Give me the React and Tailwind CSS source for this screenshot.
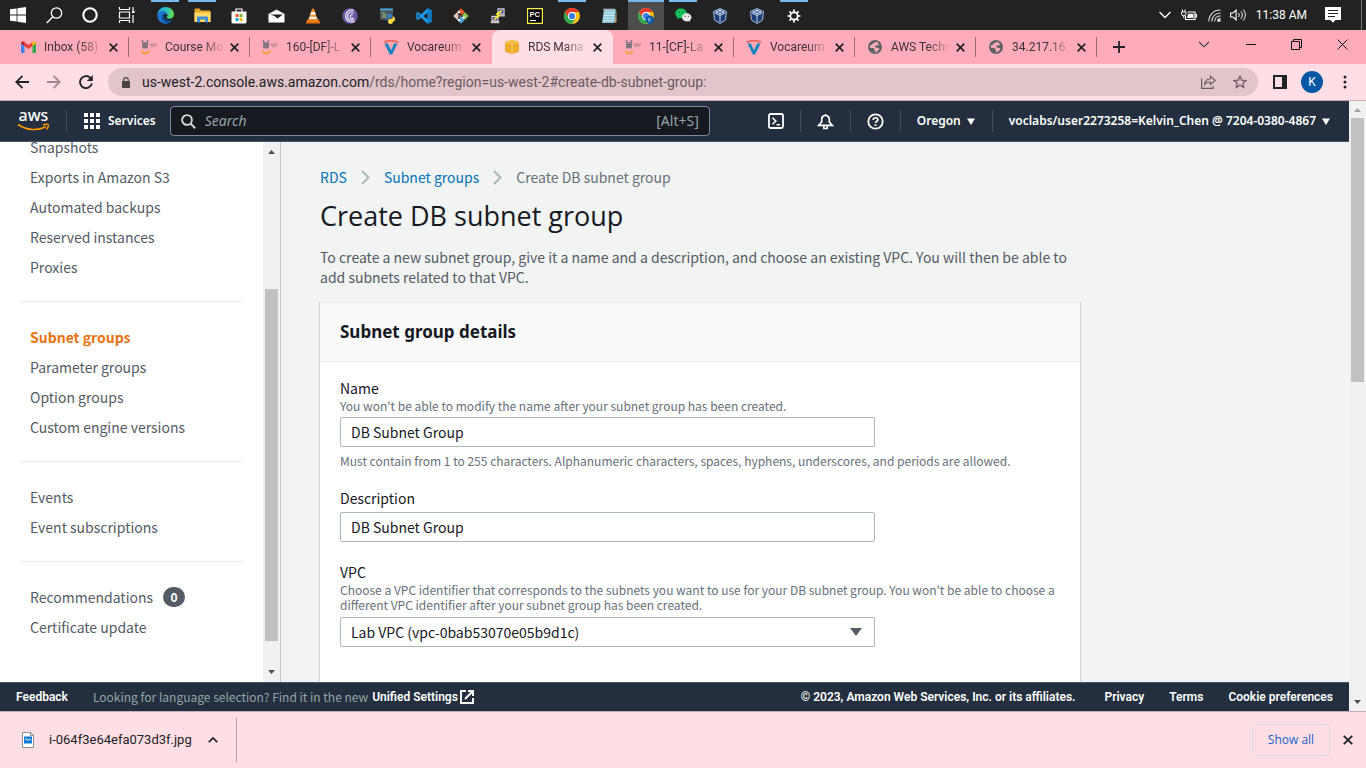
import React from "react";

/* ---------- taskbar icons ---------- */

const S = ({ children, w = 16, h = 16, vb = "0 0 16 16", className = "" }) => (
  <svg width={w} height={h} viewBox={vb} fill="none" className={`shrink-0 ${className}`} aria-hidden="true">
    {children}
  </svg>
);

const Windows = () => (
  <S>
    <path d="M0 2.3 6.6 1.4V7.6H0zM7.4 1.2 16 0V7.6H7.4zM0 8.4H6.6V14.6L0 13.7zM7.4 8.4H16V16L7.4 14.8z" fill="#fff" />
  </S>
);
const SearchThin = () => (
  <S w={17} h={17} vb="0 0 17 17">
    <circle cx="10.5" cy="6" r="5.2" stroke="#fff" strokeWidth="1.3" />
    <path d="M6.8 9.8 0.8 16" stroke="#fff" strokeWidth="1.3" />
  </S>
);
const Cortana = () => (
  <S>
    <circle cx="8" cy="8" r="6.7" stroke="#fff" strokeWidth="2.1" />
  </S>
);
const TaskView = () => (
  <S w={17} vb="0 0 17 16">
    <path d="M1.5 0v2.5h10V0M1.5 16v-2.500h10V16M1.500 5h10v6H1.500zM15 0v3M15 8v8" stroke="#fff" strokeWidth="1.2" />
    <path d="M14 3.500h2.500v2.500H14z" fill="#fff" />
  </S>
);
const Edge = () => (
  <S w={17} h={17} vb="0 0 24 24">
    <defs>
      <linearGradient id="edgeA" x1="2" y1="6" x2="23" y2="9" gradientUnits="userSpaceOnUse">
        <stop stopColor="#28a9e5" />
        <stop offset=".55" stopColor="#2fc4c0" />
        <stop offset="1" stopColor="#5fe04c" />
      </linearGradient>
    </defs>
    <path d="M0.500 10.500C1.200 4.500 6 0 12 0c6.800 0 12 4.600 12 10.200 0 4-3 6.300-6.400 6.300-2.600 0-4-1-4-1.800 0-.6 1.200-1 1.200-3 0-2.600-2.600-5.200-6.400-5.200-4 0-6.600 2-7.900 4z" fill="url(#edgeA)" />
    <path d="M0.400 11C1.600 8 4.600 6.500 8.200 6.500c3.400 0 6 2 6.500 4.300-1-.8-2-1-3-1-2.600 0-4.200 2.200-4.200 5 0 4.200 3.600 8 9 8.200A12 12 0 0 1 .4 11z" fill="#1a76d2" />
    <path d="M7.500 14.800c0-2.600 1.500-4.500 3.300-5-1.200 1-1.600 2.400-1.200 4 .8 3.200 4 5.200 7.600 5.200 2.100 0 3.900-.7 5.100-1.500-1.300 2.600-3.600 4.700-6.500 5.500-4.700-.2-8.300-4-8.300-8.200z" fill="#0e4f9e" />
  </S>
);
const Folder = () => (
  <S w={17} h={15} vb="0 0 17 15">
    <path d="M.5 1.500A1 1 0 0 1 1.500.5h4l1.500 2h8.500a1 1 0 0 1 1 1V14H.5z" fill="#e9a923" />
    <path d="M.5 4.500h16V14H.5z" fill="#fed867" />
    <path d="M3 14.500V9.500a1 1 0 0 1 1-1h9a1 1 0 0 1 1 1v5h-3v-3H6v3z" fill="#3f8fd8" />
  </S>
);
const Store = () => (
  <S>
    <path d="M5 4V1h6v3" stroke="#fff" strokeWidth="1.2" />
    <path d="M.5 3.500h15V14a1.500 1.500 0 0 1-1.500 1.500H2A1.500 1.500 0 0 1 .5 14z" fill="#fff" />
    <path d="M4.500 6h3v3h-3z" fill="#f0502a" />
    <path d="M8.500 6h3v3h-3z" fill="#7db928" />
    <path d="M4.500 10h3v3h-3z" fill="#1ba1e2" />
    <path d="M8.500 10h3v3h-3z" fill="#fbb900" />
  </S>
);
const Mail = () => (
  <S w={17} h={14} vb="0 0 17 14">
    <path d="M.5 5 8.500.5l8 4.500v8.500H.5z" fill="#fff" />
    <path d="M2 5.500h13L9.500 9.500 6.500 7z" fill="#222" />
  </S>
);
const Vlc = () => (
  <S>
    <path d="M2.500 11h11l1.800 4.500H.7z" fill="#e8720c" />
    <path d="M7 .8h2l3.600 11.400c-1.600 1.400-7.600 1.400-9.200 0z" fill="#f58a1f" />
    <path d="M6 4h4l.9 2.800H5.100zM4.500 8.700h7l.8 2.400H3.700z" fill="#f1f1f1" />
  </S>
);
const BitTorrent = () => (
  <S>
    <circle cx="8" cy="8" r="7.700" fill="#6a58a5" />
    <path d="M12 2.500A6 6 0 1 0 13 13M11.500 5A3.800 3.800 0 1 0 12 11M11 7a1.800 1.800 0 1 0 .5 2.500" stroke="#e9e5f5" strokeWidth="1.200" />
  </S>
);
const PyTerminal = () => (
  <S>
    <path d="M1 .5h13V12H1z" fill="#4a5258" />
    <path d="M1 .5h13v2H1z" fill="#4aa0d8" />
    <path d="M2.500 5h4M3.500 7h4M2.500 9h5" stroke="#9fc77a" strokeWidth="1" />
    <path d="M8 7.500c0-1.500 1-2 2.500-2S13 6 13 7.500V10H9.500C8 10 7.500 11 7.500 12.500 6 12 6 9 8 9z" fill="#3d7ab5" />
    <path d="M13.500 8.500c2 0 2.500 1 2.500 2.500s-.5 2.500-2 2.500c0 1.500-.8 2.500-2.500 2.500S9 15 9 13.500 9.500 11 11 11h2.500z" fill="#ffd94a" />
  </S>
);
const VsCode = () => (
  <S>
    <path d="M11.500.3 5 6.400 2 4 .5 4.800v6.400L2 12l3-2.400 6.500 6.100 4-1.700V2zM11.500 4.500v7L7.200 8zM2 6.200 3.700 8 2 9.800z" fill="#1f9cf0" fillRule="evenodd" />
    <path d="m11.500.3 4 1.700v12l-4 1.700z" fill="#0b78c4" />
  </S>
);
const Git = () => (
  <S>
    <path d="M8 .3 11.800 4 8 8 4.200 4z" fill="#e8562c" />
    <path d="M4 4.300 7.800 8 4 11.800.3 8z" fill="#e8c9b5" />
    <path d="M12 4.300 15.700 8 12 11.800 8.200 8z" fill="#8cc84b" />
    <path d="M8 8.200l3.800 3.800L8 15.700 4.200 12z" fill="#4f9fd8" />
    <path d="M6 3.500v9M6 5l4.500 4.500" stroke="#2b2b2b" strokeWidth="1.400" />
    <circle cx="6" cy="4" r="1.300" fill="#fff" />
    <circle cx="10.500" cy="9.500" r="1.300" fill="#fff" />
    <circle cx="6" cy="12" r="1.300" fill="#fff" />
  </S>
);
const Putty = () => (
  <S>
    <path d="M8 .8h6v5H8zM2 8.300h6v4.500H2z" fill="#3333a8" stroke="#d3d3d3" strokeWidth="1.200" />
    <path d="M7 6.500h8v2H7zM.8 13h8.500v2.200H.8z" fill="#c3c3c3" />
    <path d="M12 2.500 7 6l2 1.500-5 4" stroke="#ffee2b" strokeWidth="1.800" />
  </S>
);
const PyCharm = () => (
  <S>
    <path d="M.6.6h14.800v14.800H.6z" fill="#000" stroke="#f5f34a" strokeWidth="1.200" />
    <path d="M3 12.500h6" stroke="#fff" strokeWidth="1.200" />
    <text x="2.600" y="9" fontSize="7.500" fontWeight="700" fill="#fff" fontFamily="Liberation Sans, sans-serif">PC</text>
  </S>
);
const Chrome = ({ badge }) => (
  <S>
    <circle cx="8" cy="8" r="8" fill="#fbc116" />
    <path d="M8 8V4h6.930A8 8 0 0 0 1.070 4L4.540 10z" fill="#e33b2e" />
    <path d="M1.070 4A8 8 0 0 0 8 16l3.460-6L8 8 4.540 10z" fill="#2da94f" />
    <circle cx="8" cy="8" r="4" fill="#fff" />
    <circle cx="8" cy="8" r="3.100" fill="#3b7ded" />
    {badge && (
      <>
        <circle cx="11.800" cy="11.800" r="4.200" fill="#0b57a4" />
        <path d="M10.800 10v3.600M13 10l-2 1.800 2 1.800" stroke="#cfe3f7" strokeWidth=".7" />
      </>
    )}
  </S>
);
const Notepad = () => (
  <S>
    <path d="M3 1.500h12L13.500 15H1z" fill="#8fc9dc" />
    <path d="M13.500 15 15.500 1.500V14z" fill="#caa56a" />
    <path d="M3 .5v2M5 .5v2M7 .5v2M9 .5v2M11 .5v2M13 .5v2" stroke="#e5e5e5" strokeWidth="1" />
    <path d="M3 5h10.500M2.800 7.500h10.500M2.500 10H13M2.200 12.500h10.500" stroke="#cdeaf3" strokeWidth="1" />
  </S>
);
const WeChat = () => (
  <S w={17} h={15} vb="0 0 17 15">
    <path d="M6 .5C2.800.5.3 2.600.3 5.300c0 1.500.8 2.800 2 3.700L1.800 11l2.200-1.100c.7.2 1.300.3 2 .3 3.200 0 5.700-2.200 5.700-4.900S9.200.5 6 .5z" fill="#12c65b" />
    <circle cx="4.200" cy="4" r=".8" fill="#1b5a33" />
    <circle cx="8" cy="4" r=".8" fill="#1b5a33" />
    <path d="M11.800 5.300c-2.700 0-4.800 1.800-4.800 4s2.100 4.100 4.800 4.100c.5 0 1.100-.1 1.600-.3l1.800.9-.4-1.700c1-.7 1.700-1.800 1.700-3 0-2.200-2.100-4-4.700-4z" fill="#ececec" />
    <circle cx="10.200" cy="8.300" r=".7" fill="#666" />
    <circle cx="13.400" cy="8.300" r=".7" fill="#666" />
  </S>
);
const VirtualBox = () => (
  <S>
    <path d="M8 .5 14.500 3.500 13.500 12 8 15.500 2.500 12 1.500 3.500z" fill="#1d3e78" stroke="#a9bfdc" strokeWidth="1" />
    <path d="M8 1.500 13 4 8 6.500 3 4z" fill="#dfe9f6" />
    <path d="M8 7v7.500M3 5l5 2.500L13 5" stroke="#c5d6ec" strokeWidth="1" />
    <path d="m5.500 3.200 5 2.200M10.500 3.200l-5 2.200" stroke="#2d5ca6" strokeWidth="1" />
  </S>
);
const Gear = () => (
  <S w={14} h={14} vb="0 0 14 14">
    <circle cx="7" cy="7" r="3.700" stroke="#fff" strokeWidth="1.800" />
    <path d="M7 .5v2.500M7 11v2.500M.5 7H3M11 7h2.500M2.400 2.400l1.800 1.800M9.800 9.800l1.800 1.800M2.400 11.600l1.800-1.800M9.800 4.200l1.800-1.800" stroke="#fff" strokeWidth="1.700" />
  </S>
);

const systemButtons = [
  { label: "Start", Icon: Windows },
  { label: "Search Windows", Icon: SearchThin },
  { label: "Cortana", Icon: Cortana },
  { label: "Task View", Icon: TaskView },
];
const apps = [
  { label: "Edge", Icon: Edge, open: true },
  { label: "File Explorer", Icon: Folder, open: true },
  { label: "Store", Icon: Store },
  { label: "Mail", Icon: Mail },
  { label: "VLC", Icon: Vlc },
  { label: "BitTorrent", Icon: BitTorrent },
  { label: "Python terminal", Icon: PyTerminal },
  { label: "VS Code", Icon: VsCode },
  { label: "Git", Icon: Git },
  { label: "PuTTY", Icon: Putty },
  { label: "PyCharm", Icon: PyCharm },
  { label: "Chrome", Icon: Chrome, open: true },
  { label: "Notepad", Icon: Notepad },
  { label: "Chrome profile", Icon: () => <Chrome badge />, open: true, active: true },
  { label: "WeChat", Icon: WeChat, open: true },
  { label: "VirtualBox", Icon: VirtualBox },
  { label: "VirtualBox VM", Icon: VirtualBox },
  { label: "Settings", Icon: Gear, open: true },
];

function Taskbar() {
  return (
    <div className="flex h-[30px] shrink-0 items-stretch bg-[#222222] text-white">
      {systemButtons.map(({ label, Icon }) => (
        <button key={label} aria-label={label} className="flex w-9 items-center justify-center">
          <Icon />
        </button>
      ))}
      <div className="ml-[3px] flex gap-px">
        {apps.map(({ label, Icon, open, active }) => (
          <button
            key={label}
            aria-label={label}
            className={`flex w-9 flex-col items-center ${active ? "bg-[#4d4d4d]" : ""}`}
          >
            <span className={`h-[2px] ${active ? "w-full" : "w-7"} ${open ? "bg-[#76b9ed]" : ""}`} />
            <span className="flex flex-1 items-center justify-center pb-px">
              <Icon />
            </span>
          </button>
        ))}
      </div>
      <div className="ml-auto flex items-center">
        <S w={12} h={8} vb="0 0 12 8" className="mr-[10px]">
          <path d="m.5 1 5.500 5.500L11.500 1" stroke="#fff" strokeWidth="1.300" />
        </S>
        <S w={16} h={12} vb="0 0 16 12" className="mr-[11px]">
          <path d="M6.500 3h7.500v7.500H4.500V7" stroke="#fff" strokeWidth="1.200" />
          <path d="M7 4.700h5.500v4.200H6zM14.500 5H16v3.500h-1.500z" fill="#fff" />
          <path d="M.5 3h4.500v1.500a2.200 2.200 0 0 1-4.500 0zM1.500.5V3M4 .5V3M2.700 6.500V9" stroke="#fff" strokeWidth="1" />
        </S>
        <S w={13} h={13} vb="0 0 13 13" className="mr-[9px]">
          <path d="M.8 12.500C.8 6 5.500 1 12.500 1M3.800 12.500c0-5 3.700-8.500 8.700-8.500M6.700 12.500c0-3.200 2.400-5.600 5.800-5.600M9.500 12.500c0-1.700 1.200-3 3-3" stroke="#ddd" strokeWidth="1.100" />
          <circle cx="11.300" cy="11.500" r="1.300" fill="#fff" />
        </S>
        <S w={17} h={14} vb="0 0 17 14" className="mr-[9px]">
          <path d="M.6 5v4h2.500l3 3V2L3.100 5z" stroke="#fff" strokeWidth="1.100" />
          <path d="M8.500 5a3 3 0 0 1 0 4M10.800 3.200a5.500 5.500 0 0 1 0 7.600M13.200 1.500a8 8 0 0 1 0 11" stroke="#eee" strokeWidth="1" />
        </S>
        <span className="font-['Roboto',sans-serif] text-xs">11:38 AM</span>
        <S w={16} h={16} vb="0 0 16 16" className="ml-[18px]">
          <path d="M0 0h16v13h-5.500L8 15.800 5.500 13H0z" fill="#fff" />
          <path d="M3 3.500h10M3 6.500h10M3 9.500h7" stroke="#222" strokeWidth="1" />
        </S>
        <span className="ml-[20px] mr-1 h-[30px] w-px bg-[#777]" />
      </div>
    </div>
  );
}

/* ---------- browser chrome ---------- */

const Gmail = () => (
  <S w={15} h={12} vb="0 0 15 12">
    <path d="M0 1.500V11a1 1 0 0 0 1 1h2.500V4z" fill="#4285f4" />
    <path d="M15 1.500V11a1 1 0 0 1-1 1h-2.500V4z" fill="#34a853" />
    <path d="m3.500 1 4 3 4-3v4l-4 3-4-3z" fill="#ea4335" />
    <path d="M0 2.300C0 .6 2 0 3.500 1v4L0 2.500z" fill="#c5221f" />
    <path d="M15 2.300C15 .6 13 0 11.500 1v4L15 2.500z" fill="#fbbc04" />
  </S>
);
const Llama = () => (
  <S w={16} h={15} vb="0 0 16 15">
    <path d="M1.500 0v2.500M6.500 0v2.500" stroke="#8a7682" strokeWidth="1.600" />
    <path d="M1 2h6V8.500H1z" fill="#93808c" />
    <path d="M1.500 4.500h5M1.500 6.800h5" stroke="#6f616c" strokeWidth="1" />
    <path d="M8.500 5.500c1-2.500 1.500-2.500 2 0s1.300 1 1.500-1 1.300-1 1.500 1 1.500.5 2-2.500" stroke="#cd8f9b" strokeWidth="1.500" />
    <path d="M1 10.500c0 4 6.500 4 6.500 0" stroke="#f6a13f" strokeWidth="1.800" />
  </S>
);
const Voc = () => (
  <S w={16} h={15} vb="0 0 16 15">
    <path d="M.8 2.300C5 .4 11 .4 15.200 2.300" stroke="#f0645a" strokeWidth="1.600" />
    <path d="M1.500 3.500h3.300L8 10.200l3.200-6.700h3.300L9.200 14.500H6.800z" fill="#1585c0" />
  </S>
);
const Cube = () => (
  <S w={16} h={16} vb="0 0 16 16">
    <path d="M8 .8 15 3v9.500L8 15.300 1 12.500V3z" fill="#efac28" />
    <path d="M1 3.300 8 5.200l7-1.900M8 5.200v10" stroke="#f9d07c" strokeWidth=".9" />
    <path d="M8 .8 15 3 8 5 1 3z" fill="#f5be46" />
  </S>
);
const Globe = () => (
  <S w={14} h={14} vb="0 0 14 14">
    <circle cx="7" cy="7" r="7" fill="#5f6368" />
    <path d="M8 1.500c-.3 1.200-1 1.300-2.200 1.500C4.500 3.200 5 4.500 3.800 4.800c-1 .2-2 .8-2.200 1.700C1.500 7.700 3 8 4.500 8s2 .6 2 1.700c0 .8.800.9.900 2.300.1 1 .8.600 1.200 0 .7-1 2.400-1.500 2.600-2.900.1-1.100-1.200-1.300-2.200-1.300-1.200 0-1.800-.8-1.800-1.600 0-.9 1.300-1 2.300-.8 1.200.2 1.500-.7 1-1.600C10 3 9.200 2 8 1.500z" fill="#ffabb9" />
  </S>
);
const Cross = ({ size = 9, sw = 1.7 }) => (
  <S w={size} h={size} vb="0 0 9 9">
    <path d="m.7.7 7.600 7.600M8.300.7.7 8.300" stroke="#202124" strokeWidth={sw} />
  </S>
);

const tabs = [
  { title: "Inbox (58)", Icon: Gmail },
  { title: "Course Mo", Icon: Llama },
  { title: "160-[DF]-L", Icon: Llama },
  { title: "Vocareum", Icon: Voc },
  { title: "RDS Mana", Icon: Cube, active: true },
  { title: "11-[CF]-La", Icon: Llama },
  { title: "Vocareum", Icon: Voc },
  { title: "AWS Techn", Icon: Globe },
  { title: "34.217.16.", Icon: Globe },
];

function TabStrip() {
  return (
    <div className="flex h-[34px] shrink-0 items-stretch bg-[#ffabb9] pl-2 font-['Roboto',sans-serif] text-xs text-[#3c3034]">
      {tabs.map(({ title, Icon, active }, i) => (
        <div
          key={i}
          className={`flex w-[121px] shrink-0 items-center pl-3 ${active ? "rounded-t-lg bg-[#ffdfe5]" : ""}`}
        >
          <span className="flex w-4 justify-center">
            <Icon />
          </span>
          <span className="ml-2 w-[61px] whitespace-nowrap [mask-image:linear-gradient(to_right,black_36px,transparent_60px)]">
            {title}
          </span>
          <button aria-label={`Close ${title}`} className="ml-1 flex">
            <Cross />
          </button>
          <span
            className={`ml-auto h-5 w-px ${active || tabs[i + 1]?.active ? "" : "bg-[#9b6a74]"}`}
          />
        </div>
      ))}
      <button aria-label="New tab" className="ml-4 flex items-center">
        <S w={12} h={12} vb="0 0 12 12">
          <path d="M6 0v12M0 6h12" stroke="#202124" strokeWidth="1.800" />
        </S>
      </button>
      <div className="ml-auto flex items-start pt-2 pr-[18px]">
        <button aria-label="Search tabs" className="flex h-3 w-[46px] items-center justify-end">
          <S w={12} h={7} vb="0 0 12 7"><path d="m1 .8 5 5 5-5" stroke="#333" strokeWidth="1.100" /></S>
        </button>
        <button aria-label="Minimize" className="flex h-3 w-[46px] items-center justify-end">
          <S w={10} h={1} vb="0 0 10 1"><path d="M0 .5h10" stroke="#111" strokeWidth="1" /></S>
        </button>
        <button aria-label="Restore" className="flex h-3 w-[46px] items-center justify-end">
          <S w={11} h={11} vb="0 0 11 11"><path d="M.5 2.500h8v8h-8zM2.500 2.500v-2h8v8h-2" stroke="#111" strokeWidth="1" /></S>
        </button>
        <button aria-label="Close window" className="flex h-3 w-[46px] items-center justify-end">
          <S w={11} h={11} vb="0 0 11 11"><path d="m.5.5 10 10M10.500.5l-10 10" stroke="#111" strokeWidth="1" /></S>
        </button>
      </div>
    </div>
  );
}

function Toolbar() {
  return (
    <div className="flex h-[37px] shrink-0 items-center border-b border-[#c5adb2] bg-[#ffdfe5] pr-[19px] pl-[15px]">
      <button aria-label="Back" className="flex">
        <S w={14} h={14} vb="0 0 14 14"><path d="M14 7H1.500M7.500.8 1.300 7l6.200 6.200" stroke="#202124" strokeWidth="1.800" /></S>
      </button>
      <button aria-label="Forward" className="ml-[18px] flex">
        <S w={14} h={14} vb="0 0 14 14"><path d="M0 7h12.500M6.500.8 12.700 7l-6.200 6.200" stroke="#9f8a8f" strokeWidth="1.800" /></S>
      </button>
      <button aria-label="Reload" className="ml-[18px] flex">
        <S w={14} h={14} vb="0 0 14 14">
          <path d="M12.900 8.500A6 6 0 1 1 11.300 2.800L12.500 4" stroke="#202124" strokeWidth="1.900" />
          <path d="M13.800 0v6H7.800z" fill="#202124" />
        </S>
      </button>
      <div className="ml-[15px] flex h-7 flex-1 items-center rounded-full bg-[#e1c5ca] pr-[11px] pl-[14px]">
        <S w={8} h={11} vb="0 0 8 11">
          <path d="M0 4h8v7H0z" fill="#4b4447" />
          <path d="M1.800 4.500V2.800a2.200 2.200 0 0 1 4.400 0v1.700" stroke="#4b4447" strokeWidth="1.200" />
        </S>
        <span className="ml-3 flex-1 font-['Roboto',sans-serif] text-sm whitespace-nowrap text-[#6b5b5f]">
          <span className="text-[#202124]">us-west-2.console.aws.amazon.com</span>/rds/home?region=us-west-2#create-db-subnet-group:
        </span>
        <button aria-label="Share" className="flex">
          <S w={15} h={14} vb="0 0 15 14">
            <path d="M.6 3.500v9.900h11.500v-2.500" stroke="#6b5b5f" strokeWidth="1.200" />
            <path d="M3.500 9.500C4 5.800 6.300 4 9.500 4V1.200L14.200 5.500 9.500 9.500V7C7 7 5 7.500 3.500 9.500z" stroke="#6b5b5f" strokeWidth="1.100" />
          </S>
        </button>
        <button aria-label="Bookmark" className="ml-[17px] flex">
          <S w={14} h={14} vb="0 0 14 14">
            <path d="m7 1.200 1.700 3.900 4.300.4-3.200 2.800.9 4.200L7 10.300l-3.700 2.200.9-4.200L1 5.500l4.300-.4z" stroke="#6b5b5f" strokeWidth="1.300" />
          </S>
        </button>
      </div>
      <button aria-label="Side panel" className="ml-[15px] flex">
        <S w={14} h={14} vb="0 0 14 14">
          <path d="M1 1h12v12H1z" stroke="#202124" strokeWidth="2" />
          <path d="M9 0h5v14H9z" fill="#202124" />
        </S>
      </button>
      <button aria-label="Profile" className="ml-[14px] flex h-[22px] w-[22px] items-center justify-center rounded-full bg-[#0157a5] font-['Roboto',sans-serif] text-xs text-white">
        K
      </button>
      <button aria-label="Menu" className="ml-5 flex">
        <S w={4} h={14} vb="0 0 4 14">
          <circle cx="2" cy="2" r="1.500" fill="#202124" />
          <circle cx="2" cy="7" r="1.500" fill="#202124" />
          <circle cx="2" cy="12" r="1.500" fill="#202124" />
        </S>
      </button>
    </div>
  );
}

/* ---------- AWS console ---------- */

const Caret = () => (
  <S w={8} h={7} vb="0 0 8 7"><path d="M0 .5h8L4 7z" fill="currentColor" /></S>
);
const Divider = () => <span className="h-[22px] w-px shrink-0 bg-[#414d5c]" />;

function ConsoleHeader() {
  return (
    <header className="flex h-[41px] shrink-0 items-center border-b border-[#4a5361] bg-[#232f3e] font-['Noto_Sans',sans-serif] text-xs font-semibold text-white">
      <a href="#home" aria-label="AWS home" className="ml-[17px] flex">
        <S w={33} h={24} vb="0 0 33 24">
          <text x="1.500" y="12" fontSize="16" fontWeight="500" fill="#fff" fontFamily="Noto Sans, sans-serif">aws</text>
          <path d="M1 15.500c9 6.300 20 6.200 28 2.300" stroke="#ff9900" strokeWidth="1.700" />
          <path d="M26 16c2-.9 4.700-.9 5.200-.3s-.2 3.200-1.700 4.800" stroke="#ff9900" strokeWidth="1.400" />
        </S>
      </a>
      <span className="ml-4 flex"><Divider /></span>
      <button className="ml-[17px] flex items-center gap-2">
        <S w={16} h={16} vb="0 0 16 16">
          <path d="M0 0h4v4H0zM6 0h4v4H6zM12 0h4v4h-4zM0 6h4v4H0zM6 6h4v4H6zM12 6h4v4h-4zM0 12h4v4H0zM6 12h4v4H6zM12 12h4v4h-4z" fill="#fff" />
        </S>
        Services
      </button>
      <label className="ml-[14px] flex h-[30px] w-[540px] items-center rounded-sm border border-[#7d8998] bg-[#161a20] px-[10px]">
        <S w={15} h={15} vb="0 0 15 15">
          <circle cx="6" cy="6" r="4.900" stroke="#d5dbdb" strokeWidth="1.900" />
          <path d="m9.600 9.600 4.600 4.600" stroke="#d5dbdb" strokeWidth="2" />
        </S>
        <input
          type="text"
          aria-label="Search services"
          placeholder="Search"
          className="ml-[9px] min-w-0 flex-1 bg-transparent text-sm font-normal outline-none placeholder:text-[#95a5a6] placeholder:italic"
        />
        <span className="text-sm font-normal text-[#95a5a6]">[Alt+S]</span>
      </label>
      <div className="ml-auto flex items-center">
        <button aria-label="CloudShell" className="mr-4 flex">
          <S w={16} h={16} vb="0 0 16 16">
            <rect x="1" y="1" width="14" height="14" rx="1.500" stroke="#fff" strokeWidth="1.800" />
            <path d="m4.500 4.800 3.300 3.200-3.300 3.200M8.500 11.700h3.500" stroke="#fff" strokeWidth="1.600" />
          </S>
        </button>
        <Divider />
        <button aria-label="Notifications" className="mx-4 flex">
          <S w={17} h={17} vb="0 0 17 17">
            <path d="M8.500 1v1.500M8.500 2.500c-2.300 0-3.800 1.800-3.800 4V9L1.800 12.300h13.400L12.300 9V6.500c0-2.200-1.500-4-3.800-4z" stroke="#fff" strokeWidth="1.700" />
            <path d="M6.800 13v2.500h3.400V13" stroke="#fff" strokeWidth="1.600" />
          </S>
        </button>
        <Divider />
        <button aria-label="Help" className="mx-4 flex">
          <S w={17} h={17} vb="0 0 17 17">
            <circle cx="8.500" cy="8.500" r="7.200" stroke="#fff" strokeWidth="1.800" />
            <path d="M6.200 7c0-3 4.700-2.900 4.700-.3 0 1.500-2.300 1.700-2.300 3.300M8.500 11.200v1.800" stroke="#fff" strokeWidth="1.700" />
          </S>
        </button>
        <Divider />
        <button className="mr-[17px] ml-4 flex items-center gap-[6px]">Oregon <Caret /></button>
        <Divider />
        <button className="mr-[19px] ml-4 flex items-center gap-[6px]">
          voclabs/user2273258=Kelvin_Chen @ 7204-0380-4867 <Caret />
        </button>
      </div>
    </header>
  );
}

const navGroups = [
  ["Snapshots", "Exports in Amazon S3", "Automated backups", "Reserved instances", "Proxies"],
  ["Subnet groups", "Parameter groups", "Option groups", "Custom engine versions"],
  ["Events", "Event subscriptions"],
  ["Recommendations", "Certificate update"],
];

const Arrow = ({ up, color = "#505050" }) => (
  <S w={7} h={4} vb="0 0 7 4">
    <path d={up ? "M0 4h7L3.500 0z" : "M0 0h7L3.500 4z"} fill={color} />
  </S>
);

function Sidebar() {
  return (
    <div className="flex w-[281px] shrink-0 border-r border-[#c3c7c8] bg-white">
      <nav className="min-w-0 flex-1 overflow-hidden pl-5 text-sm text-[#545b64]">
        <div className="-mt-[10px]">
          {navGroups.map((group, g) => (
            <ul key={g} className={`mr-5 pl-[10px] ${g > 0 ? "border-t border-[#eaeded] pt-5" : ""} ${g < 3 ? "pb-[19px]" : ""}`}>
              {group.map((item) => (
                <li key={item} className="flex h-[30px] items-center">
                  <a href="#nav" className={item === "Subnet groups" ? "font-bold text-[#ec7211]" : ""}>{item}</a>
                  {item === "Recommendations" && (
                    <span className="ml-[10px] flex h-5 w-[22px] items-center justify-center rounded-full bg-[#545b64] text-xs font-bold text-white">0</span>
                  )}
                </li>
              ))}
            </ul>
          ))}
        </div>
      </nav>
      <div className="flex w-[17px] flex-col items-center bg-[#f1f1f1] py-2">
        <Arrow up />
        <div className="basis-[135px]" />
        <div className="w-[13px] basis-[352px] bg-[#c1c1c1]" />
        <div className="flex-1" />
        <Arrow />
      </div>
    </div>
  );
}

const Chevron = () => (
  <S w={9} h={15} vb="0 0 9 15"><path d="m1 1 6.500 6.500L1 14" stroke="#aab7b8" strokeWidth="1.900" /></S>
);

const fieldClass =
  "block h-[30px] w-full appearance-none rounded-xs border border-[#aab7b8] bg-white px-[10px] text-sm text-[#16191f] outline-none";

function Content() {
  return (
    <main className="min-w-0 flex-1 overflow-hidden bg-[#f2f3f3] pt-[25px] pl-[38px] text-sm text-[#545b64]">
      <div className="pl-px">
        <nav aria-label="Breadcrumb" className="flex h-5 items-center">
          <a href="#rds" className="text-[#0073bb]">RDS</a>
          <span className="mx-[14px]"><Chevron /></span>
          <a href="#subnets" className="text-[#0073bb]">Subnet groups</a>
          <span className="mx-[14px]"><Chevron /></span>
          <span className="text-[#687078]">Create DB subnet group</span>
        </nav>
        <h1 className="mt-[11px] font-['Open_Sans','Noto_Sans',sans-serif] text-[27px] leading-9 text-[#16191f]">Create DB subnet group</h1>
        <p className="mt-[13px] max-w-[760px] leading-5">
          To create a new subnet group, give it a name and a description, and choose an existing VPC. You will then be able to add subnets related to that VPC.
        </p>
      </div>
      <section className="mt-[15px] max-w-[762px] border border-t-[#eaeded] border-[#cdd0d0] bg-white">
        <div className="border-b border-[#eaeded] bg-[#fafafa] px-5 py-[17px]">
          <h2 className="font-['Noto_Sans',sans-serif] text-[17px] leading-6 font-bold text-[#16191f]">Subnet group details</h2>
        </div>
        <form className="px-5 pt-4 pb-16 text-xs leading-[15px] text-[#687078]">
          <label htmlFor="name" className="block text-sm leading-5 text-[#16191f]">Name</label>
          <p>You won't be able to modify the name after your subnet group has been created.</p>
          <div className="mt-1 max-w-[535px]">
            <input id="name" type="text" defaultValue="DB Subnet Group" className={fieldClass} />
          </div>
          <p className="mt-[6px]">
            Must contain from 1 to 255 characters. Alphanumeric characters, spaces, hyphens, underscores, and periods are allowed.
          </p>
          <label htmlFor="description" className="mt-5 block text-sm leading-5 text-[#16191f]">Description</label>
          <div className="mt-1 max-w-[535px]">
            <input id="description" type="text" defaultValue="DB Subnet Group" className={fieldClass} />
          </div>
          <label htmlFor="vpc" className="mt-5 block text-sm leading-5 text-[#16191f]">VPC</label>
          <p className="max-w-[715px]">
            Choose a VPC identifier that corresponds to the subnets you want to use for your DB subnet group. You won't be able to choose a different VPC identifier after your subnet group has been created.
          </p>
          <div className="relative mt-[5px] max-w-[535px]">
            <select id="vpc" className={fieldClass}>
              <option>Lab VPC (vpc-0bab53070e05b9d1c)</option>
            </select>
            <span className="pointer-events-none absolute top-[11px] right-[13px]">
              <S w={12} h={8} vb="0 0 12 8"><path d="M0 0h12L6 8z" fill="#545b64" /></S>
            </span>
          </div>
        </form>
      </section>
    </main>
  );
}

function ConsoleFooter() {
  return (
    <footer className="flex h-[29px] shrink-0 items-center border-t border-[#4a5361] bg-[#232f3e] px-4 font-['Roboto',sans-serif] text-xs font-semibold text-white">
      <button>Feedback</button>
      <span className="ml-[25px] font-['Noto_Sans_CJK_SC','Noto_Sans',sans-serif] font-normal text-[#95a5a6]">Looking for language selection? Find it in the new</span>
      <a href="#settings" className="ml-1 flex items-center gap-[2px]">
        Unified Settings
        <S w={14} h={14} vb="0 0 14 14">
          <path d="M6 1H1v12h12V8" stroke="#fff" strokeWidth="1.900" />
          <path d="M8 1h5v5M12.500 1.500 5 9" stroke="#fff" strokeWidth="1.900" />
        </S>
      </a>
      <span className="ml-auto">© 2023, Amazon Web Services, Inc. or its affiliates.</span>
      <a href="#privacy" className="ml-[29px]">Privacy</a>
      <a href="#terms" className="ml-[25px]">Terms</a>
      <button className="ml-[25px]">Cookie preferences</button>
    </footer>
  );
}

function DownloadBar() {
  return (
    <div className="flex h-[57px] shrink-0 items-center border-t border-[#c5adb2] bg-[#ffdfe5] pr-[13px] pl-[22px] font-['Roboto',sans-serif]">
      <S w={12} h={16} vb="0 0 12 16">
        <path d="M.5.5h8l3 3v12H.5z" fill="#fff" stroke="#8c8c8c" />
        <path d="M8.500.5v3h3" stroke="#8c8c8c" />
        <path d="M2 4.500h8v7H2z" fill="#0f7bd8" />
        <path d="m3 8 1.500-1.500L6 8.500 7.500 7 9 8.500" stroke="#fff" strokeWidth="1" />
      </S>
      <button className="ml-[15px] text-[13px] text-[#202124]">i-064f3e64efa073d3f.jpg</button>
      <button aria-label="Download options" className="ml-4 flex">
        <S w={10} h={6} vb="0 0 10 6"><path d="m.8 5.200 4.200-4.200 4.200 4.200" stroke="#202124" strokeWidth="1.700" /></S>
      </button>
      <span className="ml-[18px] h-11 w-px bg-[#b79ea4]" />
      <button className="ml-auto h-8 w-[78px] rounded border border-[#dadce0] font-['Open_Sans','Noto_Sans',sans-serif] text-xs text-[#1a5fc8]">Show all</button>
      <button aria-label="Close downloads" className="ml-[13px] flex"><Cross size={10} sw={1.6} /></button>
    </div>
  );
}

export default function App() {
  return (
    <div className="flex h-screen flex-col overflow-hidden font-['Noto_Sans_CJK_SC','Noto_Sans',sans-serif]">
      <Taskbar />
      <TabStrip />
      <Toolbar />
      <div className="flex min-h-0 flex-1">
        <div className="flex min-w-0 flex-1 flex-col">
          <ConsoleHeader />
          <div className="flex min-h-0 flex-1">
            <Sidebar />
            <Content />
          </div>
          <ConsoleFooter />
        </div>
        <div className="flex w-[17px] flex-col items-center bg-[#f1f1f1] py-[7px]">
          <Arrow up color="#a3a3a3" />
          <div className="mt-[6px] w-[13px] basis-[264px] bg-[#c1c1c1]" />
          <div className="flex-1" />
          <Arrow />
        </div>
      </div>
      <DownloadBar />
    </div>
  );
}
